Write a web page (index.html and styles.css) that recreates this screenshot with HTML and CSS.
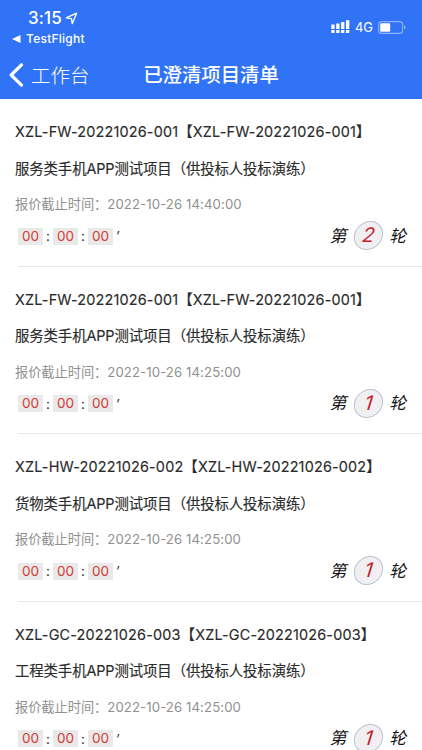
FILE: index.html
```
<!DOCTYPE html>
<html lang="zh-CN">
<head>
<meta charset="utf-8">
<title>已澄清项目清单</title>
<link rel="stylesheet" href="styles.css">
</head>
<body>
<header class="header">
  <div class="status">
    <div class="status-left">
      <div class="clock"><span>3:15</span><svg width="13" height="13" viewBox="0 0 13 13"><path d="M1.2 5.9 11.6 1.2 7.2 11.7 6.5 6.6Z" fill="none" stroke="#fff" stroke-width="1.3" stroke-linejoin="round"/></svg></div>
      <div class="return"><svg width="9" height="8" viewBox="0 0 9 8"><path d="M0 4 8.5 0v8Z" fill="#fff"/></svg><span>TestFlight</span></div>
    </div>
    <div class="status-right">
      <svg width="19" height="14" viewBox="0 0 19 14" fill="#fff"><path d="M.3 4.5h3.3V9H.3zM5.2 3.6h3.3V9H5.2zM10.1 2h3.3v7h-3.3zM15 .3h3.3V9H15z"/><path d="M.3 10h3.3v3H.3zM5.2 10h3.3v3H5.2zM10.1 10h3.3v3h-3.3zM15 10h3.3v3H15z"/></svg>
      <span class="network">4G</span>
      <svg width="28" height="13" viewBox="0 0 28 13"><rect x=".6" y=".6" width="24" height="11.8" rx="3" fill="none" stroke="#8fb0fb" stroke-width="1.1"/><rect x="2.2" y="2.2" width="10" height="8.6" rx="1.3" fill="#fff"/><path d="M26 4.3q1.5.6 1.5 2.2T26 8.7Z" fill="#8fb0fb"/></svg>
    </div>
  </div>
  <nav class="nav">
    <div class="back"><svg width="15" height="24" viewBox="0 0 15 24"><path d="M12.5 1.8 2.2 12l10.3 10.2" fill="none" stroke="#fff" stroke-width="3.2" stroke-linecap="round" stroke-linejoin="round"/></svg><span>工作台</span></div>
    <h1>已澄清项目清单</h1>
  </nav>
</header>
<main>
  <article class="item">
    <div class="code">XZL-FW-20221026-001【XZL-FW-20221026-001】</div>
    <div class="name">服务类手机APP测试项目（供投标人投标演练）</div>
    <div class="deadline">报价截止时间：<span>2022-10-26 14:40:00</span></div>
    <div class="foot"><div class="timer"><b>00</b><i>:</i><b>00</b><i>:</i><b>00</b><em>′</em></div><div class="round"><span>第</span><strong>2</strong><span>轮</span></div></div>
  </article>
  <article class="item">
    <div class="code">XZL-FW-20221026-001【XZL-FW-20221026-001】</div>
    <div class="name">服务类手机APP测试项目（供投标人投标演练）</div>
    <div class="deadline">报价截止时间：<span>2022-10-26 14:25:00</span></div>
    <div class="foot"><div class="timer"><b>00</b><i>:</i><b>00</b><i>:</i><b>00</b><em>′</em></div><div class="round"><span>第</span><strong>1</strong><span>轮</span></div></div>
  </article>
  <article class="item">
    <div class="code">XZL-HW-20221026-002【XZL-HW-20221026-002】</div>
    <div class="name">货物类手机APP测试项目（供投标人投标演练）</div>
    <div class="deadline">报价截止时间：<span>2022-10-26 14:25:00</span></div>
    <div class="foot"><div class="timer"><b>00</b><i>:</i><b>00</b><i>:</i><b>00</b><em>′</em></div><div class="round"><span>第</span><strong>1</strong><span>轮</span></div></div>
  </article>
  <article class="item">
    <div class="code">XZL-GC-20221026-003【XZL-GC-20221026-003】</div>
    <div class="name">工程类手机APP测试项目（供投标人投标演练）</div>
    <div class="deadline">报价截止时间：<span>2022-10-26 14:25:00</span></div>
    <div class="foot"><div class="timer"><b>00</b><i>:</i><b>00</b><i>:</i><b>00</b><em>′</em></div><div class="round"><span>第</span><strong>1</strong><span>轮</span></div></div>
  </article>
</main>
</body>
</html>
```
FILE: styles.css
```
* { box-sizing: border-box; }
body {
  margin: 0;
  height: 750px;
  overflow: hidden;
  background: #fff;
  color: #2b2b2b;
  font-family: Inter, "Noto Sans CJK SC", sans-serif;
}
svg { display: block; flex: none; }
.header { height: 99px; background: #3173f6; color: #fff; }
.status { height: 50px; display: flex; justify-content: space-between; }
.status-left { padding: 8px 0 0 12px; }
.clock { display: flex; align-items: center; gap: 3px; height: 20px; padding-left: 16px; font-size: 17px; font-weight: 500; letter-spacing: 0.1px; }
.return { display: flex; align-items: center; gap: 5px; height: 21px; font-size: 12px; font-weight: 500; letter-spacing: 0.25px; }
.status-right { display: flex; align-items: center; height: 14px; margin: 20px 16px 0 0; }
.network { margin: 0 5px; font-size: 13px; line-height: 14px; font-weight: 400; }
.nav { position: relative; height: 49px; display: flex; align-items: center; justify-content: center; }
.back { position: absolute; left: 9px; top: 0; height: 49px; display: flex; align-items: center; gap: 7px; font-size: 19.5px; font-weight: 300; }
h1 { margin: 0; font-size: 19.4px; line-height: 28px; font-weight: 500; }
.item { height: 167.5px; padding: 15px 14px 0 15px; position: relative; white-space: nowrap; }
.item::after { content: ""; position: absolute; left: 18px; right: 0; bottom: 0; height: 1px; background: #e6e6e6; }
.code, .name { height: 36.5px; line-height: 36.5px; font-size: 14.4px; font-weight: 400; -webkit-text-stroke: 0.15px #2b2b2b; }
.code { letter-spacing: 0.19px; }
.name { letter-spacing: -0.1px; }
.deadline { height: 34px; line-height: 34px; font-size: 13.2px; color: #909090; }
.deadline span { letter-spacing: 0.09px; }
.foot { display: flex; justify-content: space-between; align-items: center; height: 29px; }
.timer { display: flex; align-items: center; padding: 1px 0 0 3px; font-size: 13.5px; }
.timer b { width: 25px; height: 17px; line-height: 17px; text-align: center; font-weight: 400; color: #d33b35; background: #e9e9e9; }
.timer i { width: 10px; text-align: center; font-style: normal; }
.timer em { margin-left: 3px; }
.round { display: flex; align-items: center; margin-right: 2px; color: #111; font-size: 16.8px; font-style: italic; }
.round span { line-height: 24px; }
.round strong {
  width: 29px; height: 29px; margin: 0 6px 0 8px;
  border: 1.5px solid #bfc1d2; border-radius: 50%; background: #f0f0f2;
  transform: skewX(-8deg);
  color: #c3202b; font-size: 20px; line-height: 26px; text-align: center; font-weight: 400;
}
```
